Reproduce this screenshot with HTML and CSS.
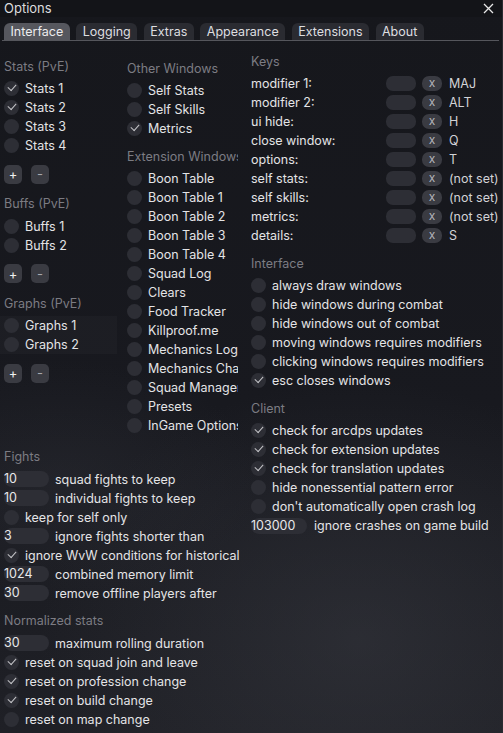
FILE: index.html
```html
<!DOCTYPE html>
<html>
<head>
<meta charset="utf-8">
<link rel="stylesheet" href="styles.css">
</head>
<body>
<div class="window">
  <div class="titlebar">
    <span class="title">Options</span>
    <svg class="close" width="11" height="11" viewBox="0 0 11 11"><path d="M1 1 L10 10 M10 1 L1 10" stroke="#e8e8e8" stroke-width="1.3" fill="none"/></svg>
  </div>
  <div class="tabs">
    <div class="tab active">Interface</div>
    <div class="tab">Logging</div>
    <div class="tab">Extras</div>
    <div class="tab">Appearance</div>
    <div class="tab">Extensions</div>
    <div class="tab">About</div>
  </div>
  <div class="content">
    <div class="leftpart">
      <div class="cols">
        <div class="col col1">
          <div class="hdr">Stats (PvE)</div>
          <div class="row"><span class="cb on"></span>Stats 1</div>
          <div class="row"><span class="cb on"></span>Stats 2</div>
          <div class="row"><span class="cb"></span>Stats 3</div>
          <div class="row"><span class="cb"></span>Stats 4</div>
          <div class="btns"><span class="btn">+</span><span class="btn minus">-</span></div>
          <div class="hdr">Buffs (PvE)</div>
          <div class="row"><span class="cb"></span>Buffs 1</div>
          <div class="row"><span class="cb"></span>Buffs 2</div>
          <div class="btns"><span class="btn">+</span><span class="btn minus">-</span></div>
          <div class="hdr">Graphs (PvE)</div>
          <div class="group">
            <div class="row"><span class="cb"></span>Graphs 1</div>
            <div class="row"><span class="cb"></span>Graphs 2</div>
          </div>
          <div class="btns"><span class="btn">+</span><span class="btn minus">-</span></div>
        </div>
        <div class="col col2">
          <div class="hdr">Other Windows</div>
          <div class="row"><span class="cb"></span>Self Stats</div>
          <div class="row"><span class="cb"></span>Self Skills</div>
          <div class="row"><span class="cb on"></span>Metrics</div>
          <div class="hdr sec">Extension Windows</div>
          <div class="row"><span class="cb"></span>Boon Table</div>
          <div class="row"><span class="cb"></span>Boon Table 1</div>
          <div class="row"><span class="cb"></span>Boon Table 2</div>
          <div class="row"><span class="cb"></span>Boon Table 3</div>
          <div class="row"><span class="cb"></span>Boon Table 4</div>
          <div class="row"><span class="cb"></span>Squad Log</div>
          <div class="row"><span class="cb"></span>Clears</div>
          <div class="row"><span class="cb"></span>Food Tracker</div>
          <div class="row"><span class="cb"></span>Killproof.me</div>
          <div class="row"><span class="cb"></span>Mechanics Log</div>
          <div class="row"><span class="cb"></span>Mechanics Chart</div>
          <div class="row"><span class="cb"></span>Squad Manager</div>
          <div class="row"><span class="cb"></span>Presets</div>
          <div class="row"><span class="cb"></span>InGame Options</div>
        </div>
      </div>
      <div class="bottom">
        <div class="hdr">Fights</div>
        <div class="row"><span class="inp">10</span>squad fights to keep</div>
        <div class="row"><span class="inp">10</span>individual fights to keep</div>
        <div class="row"><span class="cb"></span>keep for self only</div>
        <div class="row"><span class="inp">3</span>ignore fights shorter than</div>
        <div class="row"><span class="cb on"></span>ignore WvW conditions for historical</div>
        <div class="row"><span class="inp">1024</span>combined memory limit</div>
        <div class="row"><span class="inp">30</span>remove offline players after</div>
        <div class="hdr sec">Normalized stats</div>
        <div class="row"><span class="inp">30</span>maximum rolling duration</div>
        <div class="row"><span class="cb on"></span>reset on squad join and leave</div>
        <div class="row"><span class="cb on"></span>reset on profession change</div>
        <div class="row"><span class="cb on"></span>reset on build change</div>
        <div class="row"><span class="cb"></span>reset on map change</div>
      </div>
    </div>
    <div class="col col3">
      <div class="hdr">Keys</div>
      <div class="row key"><span class="klabel">modifier 1:</span><span class="kbox"></span><span class="kx">x</span><span class="kval">MAJ</span></div>
      <div class="row key"><span class="klabel">modifier 2:</span><span class="kbox"></span><span class="kx">x</span><span class="kval">ALT</span></div>
      <div class="row key"><span class="klabel">ui hide:</span><span class="kbox"></span><span class="kx">x</span><span class="kval">H</span></div>
      <div class="row key"><span class="klabel">close window:</span><span class="kbox"></span><span class="kx">x</span><span class="kval">Q</span></div>
      <div class="row key"><span class="klabel">options:</span><span class="kbox"></span><span class="kx">x</span><span class="kval">T</span></div>
      <div class="row key"><span class="klabel">self stats:</span><span class="kbox"></span><span class="kx">x</span><span class="kval">(not set)</span></div>
      <div class="row key"><span class="klabel">self skills:</span><span class="kbox"></span><span class="kx">x</span><span class="kval">(not set)</span></div>
      <div class="row key"><span class="klabel">metrics:</span><span class="kbox"></span><span class="kx">x</span><span class="kval">(not set)</span></div>
      <div class="row key"><span class="klabel">details:</span><span class="kbox"></span><span class="kx">x</span><span class="kval">S</span></div>
      <div class="hdr sec">Interface</div>
      <div class="row"><span class="cb"></span>always draw windows</div>
      <div class="row"><span class="cb"></span>hide windows during combat</div>
      <div class="row"><span class="cb"></span>hide windows out of combat</div>
      <div class="row"><span class="cb"></span>moving windows requires modifiers</div>
      <div class="row"><span class="cb"></span>clicking windows requires modifiers</div>
      <div class="row"><span class="cb on"></span>esc closes windows</div>
      <div class="hdr sec">Client</div>
      <div class="row"><span class="cb on"></span>check for arcdps updates</div>
      <div class="row"><span class="cb on"></span>check for extension updates</div>
      <div class="row"><span class="cb on"></span>check for translation updates</div>
      <div class="row"><span class="cb"></span>hide nonessential pattern error</div>
      <div class="row"><span class="cb"></span>don't automatically open crash log</div>
      <div class="row"><span class="inp wide">103000</span>ignore crashes on game build</div>
    </div>
  </div>
</div>
</body>
</html>
```
FILE: styles.css
```css
* { box-sizing: border-box; }
html, body { margin: 0; padding: 0; background: #17181d; }
body {
  font-family: Inter, "Noto Sans", sans-serif;
  font-size: 12.5px;
  color: #e4e4e6;
}
.window {
  width: 503px;
  height: 733px;
  overflow: hidden;
  position: relative;
  background:
    radial-gradient(ellipse 320px 260px at 360px 640px, rgba(70,72,80,0.35), rgba(0,0,0,0)),
    radial-gradient(ellipse 200px 120px at 60px 480px, rgba(60,62,70,0.25), rgba(0,0,0,0)),
    linear-gradient(180deg, #16171c 0%, #18191f 55%, #1f2026 100%);
  border-right: 1px solid #2a2b31;
}
.titlebar {
  height: 17px;
  display: flex;
  align-items: center;
  justify-content: space-between;
  padding: 0 8px 0 4px;
  background: #131418;
}
.title { line-height: 17px; color: #dcdcde; font-size: 13px; }
.close { display: block; }
.tabs {
  margin-top: 6px;
  display: flex;
  gap: 6.5px;
  border-bottom: 1px solid #55565c;
  margin-left: 2px;
  margin-right: 3px;
  padding-left: 2px;
}
.tab {
  height: 17px;
  line-height: 17px;
  padding: 0 6.5px;
  background: #2a2b31;
  border-radius: 6px 6px 0 0;
  color: #dedee0;
  font-size: 12.5px;
}
.tab.active { background: #56575e; color: #ececee; }
.content { display: flex; }
.leftpart { width: 247px; overflow: hidden; flex: none; }
.cols { display: flex; align-items: flex-start; }
.col { white-space: nowrap; }
.col1 { width: 127px; padding-left: 4px; padding-top: 15.5px; flex: none; }
.col2 { width: 111px; padding-top: 17.5px; overflow: hidden; flex: none; }
.col3 { padding-left: 4px; padding-top: 10.5px; flex: 1; }
.bottom { padding-left: 4px; margin-top: 12px; white-space: nowrap; }
.hdr {
  height: 19px;
  line-height: 19px;
  color: #7c7c83;
  margin-bottom: 3.5px;
}
.hdr.sec { margin-top: 8.5px; }
.row {
  height: 19px;
  display: flex;
  align-items: center;
  gap: 6px;
  line-height: 19px;
}
.cb {
  width: 15px;
  height: 15px;
  border-radius: 50%;
  background: #2d2e35;
  flex: none;
  position: relative;
}
.cb.on::after {
  content: "";
  position: absolute;
  left: 4px;
  top: 3px;
  width: 7px;
  height: 4px;
  border-left: 1.8px solid #c4c4c8;
  border-bottom: 1.8px solid #c4c4c8;
  transform: rotate(-48deg);
  transform-origin: center;
}
.btns {
  display: flex;
  gap: 9px;
  margin-top: 9.5px;
  margin-bottom: 10.5px;
}
.btn {
  width: 18px;
  height: 19px;
  border-radius: 5px;
  background: #3a3b42;
  display: flex;
  align-items: center;
  justify-content: center;
  color: #f0f0f0;
  font-size: 13px;
}
.btn.minus { color: #a8a8ae; }
.group {
  margin-left: -4px;
  padding-left: 4px;
  width: 117px;
  background: rgba(255,255,255,0.025);
}
.inp {
  width: 45px;
  height: 16px;
  border-radius: 8px;
  background: #2d2e35;
  line-height: 16px;
  flex: none;
  color: #e8e8ea;
}
.inp.wide { width: 56px; margin-right: 1px; }
.key { gap: 0; }
.klabel { width: 135px; flex: none; }
.kbox {
  width: 30px;
  height: 15px;
  border-radius: 7px;
  background: #2d2e35;
  flex: none;
}
.kx {
  margin-left: 6px;
  width: 20px;
  height: 15px;
  border-radius: 7px;
  background: #3a3b42;
  color: #b4b4ba;
  font-size: 12px;
  line-height: 14px;
  text-align: center;
  flex: none;
}
.kval { margin-left: 7px; color: #d2d2d6; }
```
